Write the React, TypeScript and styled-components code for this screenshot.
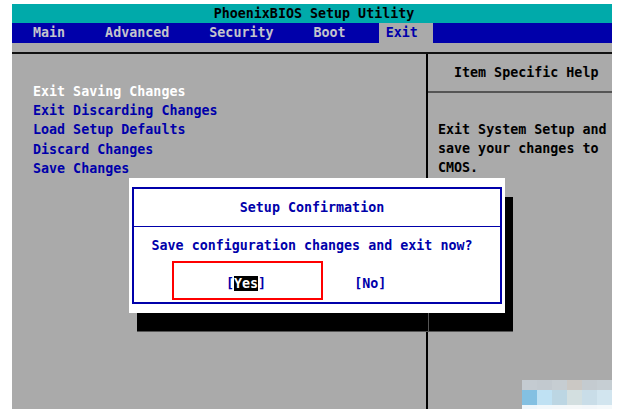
import React from 'react';
import styled, { createGlobalStyle } from 'styled-components';

const GlobalStyle = createGlobalStyle`
  html, body {
    margin: 0;
    padding: 0;
    background: #ffffff;
  }
`;

const tabs = ['Main', 'Advanced', 'Security', 'Boot', 'Exit'];
const exitItems = [
  'Exit Saving Changes',
  'Exit Discarding Changes',
  'Load Setup Defaults',
  'Discard Changes',
  'Save Changes',
];
const helpLines = ['Exit System Setup and', 'save your changes to', 'CMOS.'];
const mosaic = [
  ['#c4cbd1', '#c2c9cf', '#c6cdd2', '#cbc8c4', '#c4cbd0', '#c6ced3'],
  ['#83c0e2', '#bfe1f3', '#bcd6e3', '#d3dfe0', '#c9dde8', '#d2e5ef'],
  ['#eef6fb', '#f2f8fb', '#f4f8fa', '#f5f8f9', '#f3f7fa', '#f5f9fb'],
];

const App = () => {
  return (
    <>
      <GlobalStyle />
      <Screen>
        <TitleBar>PhoenixBIOS Setup Utility</TitleBar>
        <MenuBar>
          {tabs.map((t) => (
            <Tab key={t} $active={t === 'Exit'}>
              {t}
            </Tab>
          ))}
        </MenuBar>
        <Spacer />
        <Body>
          <ItemPanel>
            {exitItems.map((item, i) => (
              <Item key={item} $selected={i === 0}>
                {item}
              </Item>
            ))}
          </ItemPanel>
          <HelpPanel>
            <HelpHead>Item Specific Help</HelpHead>
            <HelpText>
              {helpLines.map((l) => (
                <div key={l}>{l}</div>
              ))}
            </HelpText>
          </HelpPanel>
        </Body>

        <Shadow>
          <ShadowRule />
        </Shadow>
        <Dialog>
          <DialogFrame>
            <DialogTitle>Setup Confirmation</DialogTitle>
            <DialogMessage>Save configuration changes and exit now?</DialogMessage>
            <Choices>
              <Choice>
                [<Focused>Yes</Focused>]
              </Choice>
              <Choice>[No]</Choice>
            </Choices>
          </DialogFrame>
          <Marker />
        </Dialog>

        <Mosaic>
          {mosaic.map((row, r) =>
            row.map((c, i) => <Cell key={`${r}-${i}`} $row={r} style={{ background: c }} />),
          )}
        </Mosaic>
      </Screen>
    </>
  );
};

const Screen = styled.div`
  position: relative;
  margin: 4px 0 0 12px;
  width: 600px;
  height: 405px;
  background: #aaaaaa;
  display: flex;
  flex-direction: column;
  font-family: 'DejaVu Sans Mono', 'Liberation Mono', monospace;
  font-size: 13.33px;
  font-weight: bold;
  line-height: 19.2px;
`;

const TitleBar = styled.div`
  height: 19px;
  background: #00aaaa;
  color: #000000;
  display: flex;
  align-items: center;
  justify-content: center;
  padding-left: 4px;
`;

const MenuBar = styled.div`
  height: 20px;
  background: #0000aa;
  display: flex;
  align-items: stretch;
  gap: 26px;
  padding-left: 14px;
`;

const Tab = styled.div<{ $active?: boolean }>`
  display: flex;
  align-items: center;
  padding: ${(p) => (p.$active ? '0 15px 0 7px' : '0 7px')};
  background: ${(p) => (p.$active ? '#aaaaaa' : 'transparent')};
  color: ${(p) => (p.$active ? '#0000aa' : '#c4c4cc')};
`;

const Spacer = styled.div`
  height: 9px;
  border-bottom: 2px solid #111111;
`;

const Body = styled.div`
  flex: 1;
  display: flex;
`;

const ItemPanel = styled.div`
  width: 416px;
  border-right: 2px solid #000000;
  padding: 28px 0 0 21px;
  box-sizing: border-box;
`;

const Item = styled.div<{ $selected?: boolean }>`
  color: ${(p) => (p.$selected ? '#ffffff' : '#0000aa')};
`;

const HelpPanel = styled.div`
  flex: 1;
  display: flex;
  flex-direction: column;
`;

const HelpHead = styled.div`
  height: 37px;
  display: flex;
  align-items: center;
  padding-left: 26px;
  border-bottom: 2px solid #555555;
  color: #000000;
`;

const HelpText = styled.div`
  padding: 27px 0 0 10px;
  color: #000000;
`;

const Shadow = styled.div`
  position: absolute;
  left: 125px;
  top: 193px;
  width: 376px;
  height: 135px;
  background: #000000;
  border-bottom: 1px solid #555555;
  box-sizing: border-box;
`;

const ShadowRule = styled.div`
  position: absolute;
  left: 291px;
  top: 0;
  bottom: 0;
  width: 1px;
  background: #555555;
`;

const Dialog = styled.div`
  position: absolute;
  left: 117px;
  top: 174px;
  width: 376px;
  height: 135px;
  background: #ffffff;
  padding: 9px 3px;
  box-sizing: border-box;
`;

const DialogFrame = styled.div`
  height: 100%;
  border: 2px solid #0000aa;
  box-sizing: border-box;
  display: flex;
  flex-direction: column;
  color: #0000aa;
`;

const DialogTitle = styled.div`
  height: 37px;
  border-bottom: 1px solid #0000aa;
  display: flex;
  align-items: center;
  justify-content: center;
  padding-right: 10px;
`;

const DialogMessage = styled.div`
  height: 38px;
  display: flex;
  align-items: center;
  justify-content: center;
  padding-right: 10px;
`;

const Choices = styled.div`
  flex: 1;
  display: flex;
  align-items: center;
  gap: 88px;
  padding-left: 92px;
`;

const Choice = styled.div`
  line-height: 16px;
`;

const Focused = styled.span`
  background: #000000;
  color: #ffffff;
`;

const Marker = styled.div`
  position: absolute;
  left: 43px;
  top: 83px;
  width: 151px;
  height: 39px;
  border: 2px solid #ff0000;
  box-sizing: border-box;
`;

const Mosaic = styled.div`
  position: absolute;
  left: 510px;
  top: 376px;
  display: grid;
  grid-template-columns: repeat(6, 15px);
  filter: blur(0.6px);
`;

const Cell = styled.div<{ $row: number }>`
  height: ${(p) => (p.$row === 0 ? 10 : p.$row === 1 ? 15 : 7)}px;
`;

export default App;
